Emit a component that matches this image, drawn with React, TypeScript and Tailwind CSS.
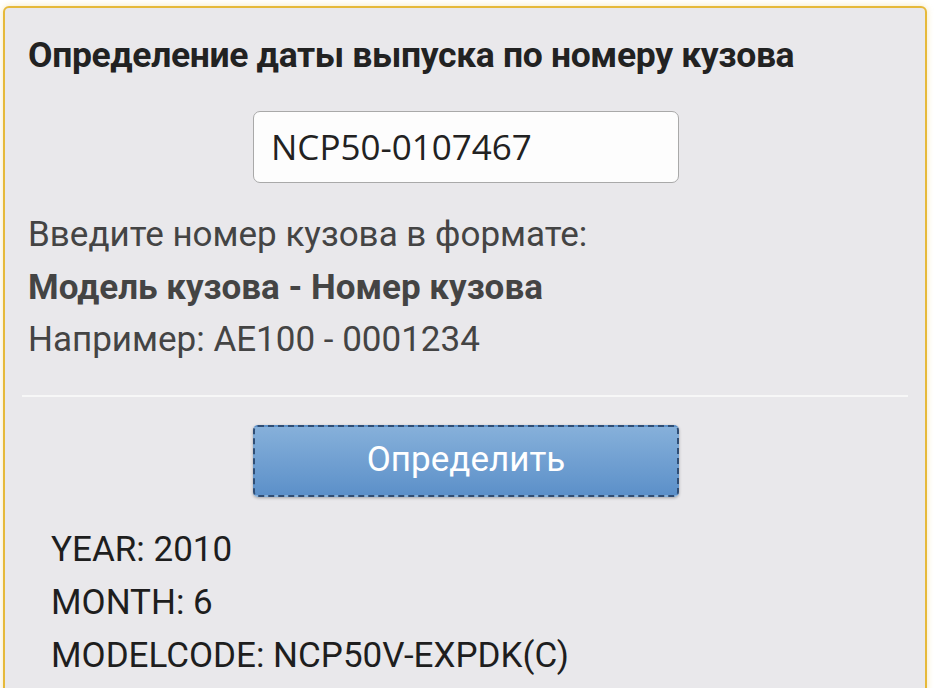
import React from "react";

export default function App() {
  return (
    <div className="w-[952px] h-[688px] bg-white overflow-hidden" style={{ fontFamily: "Roboto, 'Noto Sans', sans-serif" }}>
      <div className="ml-[3px] mt-[6px] w-[924px] h-[720px] bg-[#e9e8eb] border-2 border-[#e6b93a] rounded-[6px] shadow-[0_0_6px_rgba(230,185,58,0.35)]">
        <div className="pl-[23px] pt-[24px]">
          <h1 className="text-[35.5px] leading-[46px] font-bold text-[#222] tracking-[-0.35px] whitespace-nowrap">
            Определение даты выпуска по номеру кузова
          </h1>
        </div>
        <div className="flex justify-center mt-[33px] pl-[2px]">
          <div className="w-[426px] h-[72px] bg-[#fdfdfd] border border-[#a9a9a9] rounded-[7px] flex items-center pl-[17px] text-[35px] text-[#222]" style={{ fontFamily: "'Open Sans', sans-serif" }}>
            NCP50-0107467
          </div>
        </div>
        <div className="pl-[23px] mt-[26px] text-[35px] leading-[52.5px] text-[#444] whitespace-nowrap">
          <div>Введите номер кузова в формате:</div>
          <div className="font-bold">Модель кузова - Номер кузова</div>
          <div>Например: AE100 - 0001234</div>
        </div>
        <div className="mx-[17px] mt-[28px] h-[2px] bg-[#f7f7f7]" />
        <div className="flex justify-center mt-[28px] pl-[2px]">
          <div className="w-[426px] h-[72px] rounded-[5px] border-2 border-dashed border-[#2f4d74] bg-gradient-to-b from-[#86b0da] to-[#5c90c9] flex items-center justify-center text-white text-[35px] shadow-[0_1px_3px_rgba(0,0,0,0.3)]">
            Определить
          </div>
        </div>
        <div className="pl-[46px] mt-[26px] text-[35px] leading-[53px] text-[#1e1e1e] whitespace-nowrap">
          <div>YEAR: 2010</div>
          <div>MONTH: 6</div>
          <div>MODELCODE: NCP50V-EXPDK(C)</div>
        </div>
      </div>
    </div>
  );
}
